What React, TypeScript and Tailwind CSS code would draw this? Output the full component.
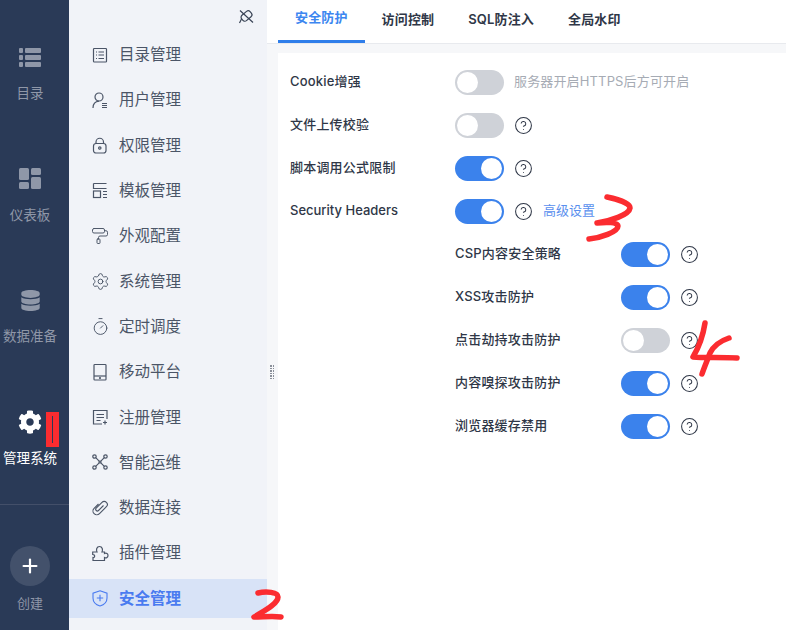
import { ReactNode } from "react";
import { CircleHelp, PaintRoller, Plus, Settings, Timer } from "lucide-react";
import { FaCog, FaDatabase } from "react-icons/fa";

const svgProps = {
  width: 18,
  height: 18,
  viewBox: "0 0 18 18",
  fill: "none",
  stroke: "currentColor",
  strokeWidth: 1.2,
};

const railItems = [
  {
    label: "目录",
    icon: (
      <svg width="22" height="20" viewBox="0 0 22 20" fill="currentColor">
        <rect x="0" y="1" width="4" height="5" rx="1" />
        <rect x="6" y="1" width="16" height="5" rx="1" />
        <rect x="0" y="8" width="4" height="5" rx="1" />
        <rect x="6" y="8" width="16" height="5" rx="1" />
        <rect x="0" y="15" width="4" height="5" rx="1" />
        <rect x="6" y="15" width="16" height="5" rx="1" />
      </svg>
    ),
  },
  {
    label: "仪表板",
    icon: (
      <svg width="22" height="21" viewBox="0 0 22 21" fill="currentColor">
        <rect x="0" y="0" width="10" height="12" rx="1.5" />
        <rect x="12" y="0" width="10" height="7" rx="1.5" />
        <rect x="0" y="14" width="10" height="7" rx="1.5" />
        <rect x="12" y="9" width="10" height="12" rx="1.5" />
      </svg>
    ),
  },
  { label: "数据准备", icon: <FaDatabase size={21} /> },
  { label: "管理系统", icon: <FaCog size={24} />, active: true },
];

const menuItems: { label: string; icon: ReactNode; active?: boolean }[] = [
  {
    label: "目录管理",
    icon: (
      <svg {...svgProps}>
        <rect x="2.5" y="2.5" width="13" height="13.5" rx="0.8" />
        <path d="M5 6h1M5 9h1M5 12.5h1M7.5 6H13M7.5 9H13M7.5 12.5H13" />
      </svg>
    ),
  },
  {
    label: "用户管理",
    icon: (
      <svg {...svgProps}>
        <circle cx="8" cy="6" r="4" />
        <path d="M2 17c0-4 2.500-6.500 6-6.800M11 12.500h5M11 14.500h5M11 16.500h5" />
      </svg>
    ),
  },
  {
    label: "权限管理",
    icon: (
      <svg {...svgProps}>
        <rect x="2.500" y="7.500" width="12.500" height="9.500" rx="2.500" />
        <path d="M5 7.500V6a3.700 3.700 0 0 1 7.500 0v1.500" />
        <circle cx="8.800" cy="12" r="1.200" />
      </svg>
    ),
  },
  {
    label: "模板管理",
    icon: (
      <svg {...svgProps}>
        <path d="M2.500 2.500H15.500M2.500 2.500v5H15.500" />
        <rect x="2.500" y="10" width="7" height="6.500" />
        <path d="M12 10.500h4M12 13.500h4M12 16.500h4" />
      </svg>
    ),
  },
  { label: "外观配置", icon: <PaintRoller size={18} strokeWidth={1.3} /> },
  { label: "系统管理", icon: <Settings size={19} strokeWidth={1.2} /> },
  { label: "定时调度", icon: <Timer size={19} strokeWidth={1.2} /> },
  {
    label: "移动平台",
    icon: (
      <svg {...svgProps}>
        <rect x="3" y="1.500" width="12" height="15.500" rx="0.800" />
        <path d="M3 13h12" />
        <circle cx="9" cy="15" r="0.500" />
      </svg>
    ),
  },
  {
    label: "注册管理",
    icon: (
      <svg {...svgProps}>
        <path d="M11 16H2.500V2.500H16V11" />
        <path d="M5.500 6.500h7.500M5.500 9.500h7.500M5.500 12.500h4M14 12.500v4M12 14.500h4" />
      </svg>
    ),
  },
  {
    label: "智能运维",
    icon: (
      <svg {...svgProps}>
        <circle cx="3.500" cy="3.500" r="1.700" />
        <circle cx="14.500" cy="3.500" r="1.700" />
        <circle cx="3.500" cy="14.500" r="1.700" />
        <circle cx="14.500" cy="14.500" r="1.700" />
        <circle cx="9" cy="9" r="1" />
        <path d="M4.700 4.700l3.500 3.500M13.300 4.700l-3.500 3.500M4.700 13.300l3.500-3.500M13.300 13.300l-3.500-3.500" />
      </svg>
    ),
  },
  {
    label: "数据连接",
    icon: (
      <svg {...svgProps} strokeWidth={1.1}>
        <path d="M12.500 6.500L7.500 11.500a1.600 1.600 0 0 1-2.300-2.300L11 3.300a3.100 3.100 0 0 1 4.400 4.400L8.500 14.700a3.800 3.800 0 0 1-5.400-5.400L7.500 5" />
      </svg>
    ),
  },
  {
    label: "插件管理",
    icon: (
      <svg {...svgProps}>
        <path d="M2 16.500v-3c2 .500 2.500-3-.300-3V8H6C5 6 5.500 2.500 8.500 2.500S12 6 11 8h2.500v1.500c2-1 3.500.500 3.500 2s-1.500 3-3.500 2v3z" />
      </svg>
    ),
  },
  {
    label: "安全管理",
    icon: (
      <svg {...svgProps} strokeWidth={1.1}>
        <path d="M9 1.800L16 4.200v4.800c0 4-3 6.800-7 8-4-1.200-7-4-7-8V4.200z" />
        <path d="M9 5.800v6.400M5.800 9h6.400" />
      </svg>
    ),
    active: true,
  },
];

const Toggle = ({ on }: { on?: boolean }) => (
  <div
    className={`flex h-[25px] w-[49px] shrink-0 items-center rounded-full px-[2px] ${
      on ? "justify-end bg-[#3b82ec]" : "justify-start bg-[#cfd2d8]"
    }`}
  >
    <div className="h-[21px] w-[21px] rounded-full bg-white" />
  </div>
);

const Help = () => <CircleHelp size={19} strokeWidth={1.3} className="shrink-0 text-[#2f3747]" />;

const Row = ({ label, children, sub }: { label: ReactNode; children: ReactNode; sub?: boolean }) => (
  <div className="flex h-[43px] items-center">
    <div
      className={`shrink-0 text-[13px] font-medium tracking-[0.2px] text-[#2f3747] ${
        sub ? "ml-[165px] w-[166px]" : "w-[165px]"
      }`}
    >
      {label}
    </div>
    {children}
  </div>
);

const subRows = [
  { label: "CSP内容安全策略", on: true },
  { label: "XSS攻击防护", on: true },
  { label: "点击劫持攻击防护", on: false },
  { label: "内容嗅探攻击防护", on: true },
  { label: "浏览器缓存禁用", on: true },
];

export default function App() {
  return (
    <div className="relative flex h-[630px] w-[786px] overflow-hidden bg-white font-['Inter','Noto_Sans_CJK_SC',sans-serif]">
      {/* left rail */}
      <div className="flex w-[69px] shrink-0 flex-col bg-[#2a3a57] pt-[14px]">
        {railItems.map((item) => (
          <div
            key={item.label}
            className={`flex h-[121.500px] w-[60px] flex-col items-center justify-center gap-[15px] ${
              item.active ? "text-white" : "text-[#8f97a8]"
            }`}
          >
            <div className="flex h-[22px] items-center">{item.icon}</div>
            <div className="whitespace-nowrap text-[13.500px] leading-[20px]">{item.label}</div>
          </div>
        ))}
        <div className="mt-[4px] h-px bg-[#434f69]" />
        <div className="mt-[41px] flex w-[60px] flex-col items-center gap-[7px]">
          <div className="flex h-[40px] w-[40px] items-center justify-center rounded-full bg-[#43516b] text-white">
            <Plus size={22} strokeWidth={2.4} />
          </div>
          <div className="text-[13px] leading-[20px] text-[#8f97a8]">创建</div>
        </div>
      </div>

      {/* menu column */}
      <div className="flex w-[198px] shrink-0 flex-col gap-[6.330px] bg-[#f1f3f8] pt-[35px]">
        {menuItems.map((item) => (
          <div
            key={item.label}
            className={`flex h-[39px] items-center pl-[22px] ${
              item.active ? "bg-[#d8e3f7] text-[#4a7bf0]" : "text-[#4b5567]"
            }`}
          >
            <div className="flex w-[28px] items-center">{item.icon}</div>
            <span className={`text-[15.500px] ${item.active ? "font-bold" : ""}`}>{item.label}</span>
          </div>
        ))}
      </div>

      {/* main */}
      <div className="flex min-w-0 flex-1 flex-col">
        <div className="flex h-[44px] shrink-0 border-b border-[#e8eaee] pl-[11px]">
          {["安全防护", "访问控制", "SQL防注入", "全局水印"].map((tab, i) => (
            <div
              key={tab}
              className={`flex h-[43px] items-center px-[17px] pb-[4px] text-[13px] font-semibold tracking-[0.15px] ${
                i === 0 ? "border-b-[3px] border-[#2f7eea] text-[#3c86f0]" : "text-[#2f3747]"
              }`}
            >
              {tab}
            </div>
          ))}
        </div>
        <div className="flex-1 bg-[#f6f7f9] pl-[11px] pt-[9px]">
          <div className="h-full bg-white pl-[12px] pt-[7.500px]">
            <Row label="Cookie增强">
              <Toggle />
              <span className="ml-[10px] text-[13px] tracking-[0.15px] text-[#a6abb4]">服务器开启HTTPS后方可开启</span>
            </Row>
            <Row label="文件上传校验">
              <Toggle />
              <span className="ml-[10px]"><Help /></span>
            </Row>
            <Row label="脚本调用公式限制">
              <Toggle on />
              <span className="ml-[10px]"><Help /></span>
            </Row>
            <Row label={<span className="tracking-normal">Security Headers</span>}>
              <Toggle on />
              <span className="ml-[10px]"><Help /></span>
              <span className="ml-[10px] text-[13px] text-[#5a8fee]">高级设置</span>
            </Row>
            {subRows.map((row) => (
              <Row key={row.label} label={row.label} sub>
                <Toggle on={row.on} />
                <span className="ml-[10px]"><Help /></span>
              </Row>
            ))}
          </div>
        </div>
      </div>

      {/* pin button over the menu column */}
      <svg
        className="absolute left-[238px] top-[8px] text-[#3a4456]"
        width="17"
        height="17"
        viewBox="0 0 17 17"
        fill="none"
        stroke="currentColor"
        strokeWidth="1.2"
      >
        <rect x="3" y="4.500" width="11" height="7" rx="2.500" transform="rotate(-40 8.500 8)" />
        <path d="M2 2.500L15 14.500M3.500 11L1.500 15" />
      </svg>

      {/* splitter handle */}
      <div className="absolute left-[270px] top-[365px] grid grid-cols-2 gap-[1px]">
        {Array.from({ length: 12 }).map((_, i) => (
          <div key={i} className="h-[1.500px] w-[1.500px] bg-[#8a8f99]" />
        ))}
      </div>

      {/* hand drawn red marks on top of the screenshot */}
      <svg
        className="pointer-events-none absolute left-0 top-0"
        width="786"
        height="630"
        viewBox="0 0 786 630"
        fill="none"
        stroke="#fb2c30"
        strokeWidth="5.500"
        strokeLinecap="round"
        strokeLinejoin="round"
      >
        <rect x="46" y="412" width="13" height="35" fill="#fb2c30" stroke="none" />
        <rect x="52" y="416" width="1" height="27" fill="#2a3a57" stroke="none" />
        <path d="M258 593C266 591 278 592 278 597C278 604 264 611 254 617C263 617 273 616 281 617" />
        <path d="M607 197C617 199 630 203 630 208C629 215 610 221 597 223C606 222 618 222 618 226C618 232 600 238 589 239" />
        <path d="M705 323C703 336 699 347 693 357C705 358 722 357 737 358" />
        <path d="M729 338C720 341 713 347 710 353C707 361 704 368 702 374" />
      </svg>
    </div>
  );
}
